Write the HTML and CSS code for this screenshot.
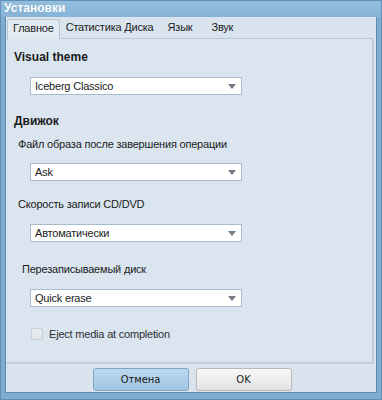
FILE: index.html
```html
<!DOCTYPE html>
<html>
<head>
<meta charset="UTF-8">
<title>Установки</title>
<link rel="stylesheet" href="styles.css">
</head>
<body>
<div class="window">
	<div class="titlebar">Установки</div>
	<div class="client">
		<div class="tabs">
			<span class="tab active">Главное</span>
			<span class="tab t2">Статистика Диска</span>
			<span class="tab t3">Язык</span>
			<span class="tab t4">Звук</span>
		</div>
		<div class="panel">
			<div class="group-title first">Visual theme</div>
			<div class="combo combo-theme">Iceberg Classico<span class="arrow"></span></div>

			<div class="group-title second">Движок</div>
			<div class="label l1">Файл образа после завершения операции</div>
			<div class="combo combo-ask">Ask<span class="arrow"></span></div>

			<div class="label l2">Скорость записи CD/DVD</div>
			<div class="combo">Автоматически<span class="arrow"></span></div>

			<div class="label l3">Перезаписываемый диск</div>
			<div class="combo">Quick erase<span class="arrow"></span></div>

			<div class="check">
				<span class="box"></span>
				<span class="check-text">Eject media at completion</span>
			</div>
		</div>
		<div class="buttons">
			<button type="button" class="btn btn-cancel">Отмена</button>
			<button type="button" class="btn btn-ok">OK</button>
		</div>
	</div>
</div>
</body>
</html>
```

FILE: styles.css
```css
* { box-sizing: border-box; }
body
{
	margin: 0;
	font-family: "Liberation Sans", Arial, sans-serif;
	font-size: 11px;
	letter-spacing: -0.2px;
	color: #1b1b1b;
}
.window
{
	width: 382px;
	height: 400px;
	background: #7eabcf;
	border: 1px solid #5f8fb6;
	display: flex;
	flex-direction: column;
}
.titlebar
{
	height: 16px;
	padding-left: 3px;
	line-height: 15px;
	font-size: 12px;
	font-weight: bold;
	letter-spacing: 0;
	color: #fff;
	background: linear-gradient(#94bedd, #86b3d6);
	text-shadow: 0 0 1px #6d9cc2;
}
.client
{
	flex: 1;
	margin: 0 4px 6px 4px;
	background: #d9e4ee;
	border: 1px solid #5e8db3;
	border-top: none;
	display: flex;
	flex-direction: column;
}
.tabs
{
	height: 21px;
	display: flex;
	align-items: flex-end;
	padding-left: 1px;
}
.tab
{
	height: 19px;
	line-height: 17px;
	padding: 0 5px;
}
.t2 { margin-left: 1px; }
.t3 { margin-left: 4px; }
.t4 { margin-left: 9px; }
.tab.active
{
	height: 20px;
	background: #e3ebf2;
	border: 1px solid #b7c6d3;
	border-bottom: none;
	border-radius: 3px 3px 0 0;
	position: relative;
	top: 1px;
}
.panel
{
	height: 325px;
	margin-right: 3px;
	background: #dae5ef;
	border: 1px solid #b9c8d4;
	border-left: none;
	box-shadow: 1px 1px 0 #c5d2dd;
	padding-top: 11px;
}
.group-title
{
	font-weight: bold;
	font-size: 12px;
	letter-spacing: 0;
	padding-left: 8px;
	line-height: 14px;
}
.second { margin-top: 19px; }
.label
{
	padding-left: 12px;
	line-height: 13px;
	margin-top: 10px;
}
.l2 { margin-top: 17px; }
.l3 { margin-top: 21px; padding-left: 16px; }
.combo
{
	position: relative;
	margin: 13px 0 0 24px;
	width: 212px;
	height: 18px;
	background: #fff;
	border: 1px solid #a9bccb;
	padding-left: 4px;
	line-height: 16px;
	font-size: 11px;
}
.combo-theme { margin-top: 13px; }
.combo-ask { margin-top: 12px; }
.arrow
{
	position: absolute;
	right: 5px;
	top: 6px;
	border-left: 4px solid transparent;
	border-right: 4px solid transparent;
	border-top: 5px solid #6f7c88;
}
.check
{
	margin: 21px 0 0 25px;
	display: flex;
	align-items: center;
	gap: 6px;
}
.box
{
	width: 12px;
	height: 12px;
	border: 1px solid #c6ced6;
	border-radius: 2px;
	background: linear-gradient(#e9edf1, #e0e5ea);
}
.check-text { color: #2c2f33; }
.buttons
{
	flex: 1;
	display: flex;
	justify-content: center;
	align-items: center;
	gap: 7px;
	padding: 4px 0 0 2px;
}
.btn
{
	width: 96px;
	height: 23px;
	font-family: "DejaVu Sans Condensed", "Liberation Sans", sans-serif;
	font-size: 11px;
	color: #1a1a1a;
	border-radius: 3px;
}
.btn-cancel
{
	background: linear-gradient(#bcd8ee, #a2c6e2);
	border: 1px solid #7ea5c5;
}
.btn-ok
{
	background: linear-gradient(#f7f7f7, #e3e3e3);
	border: 1px solid #b8b8b8;
}
```
